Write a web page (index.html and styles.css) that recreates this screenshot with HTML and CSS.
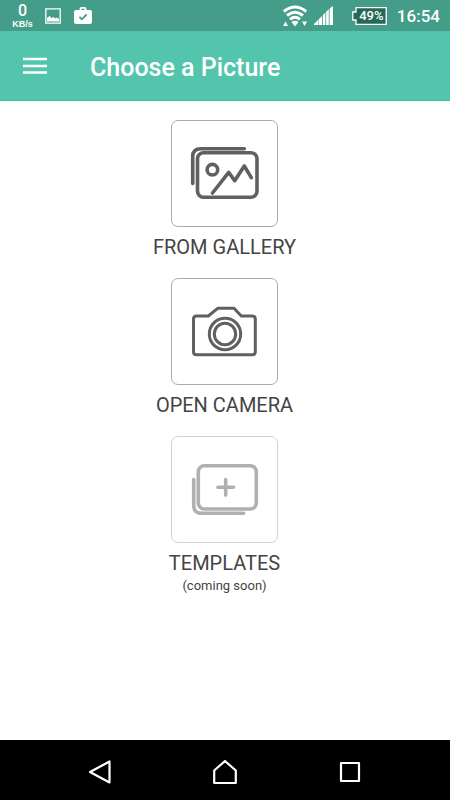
FILE: index.html
```html
<!DOCTYPE html>
<html lang="en">
<head>
<meta charset="utf-8">
<meta name="viewport" content="width=device-width, initial-scale=1">
<title>Choose a Picture</title>
<link rel="stylesheet" href="styles.css">
</head>
<body>
<div class="status">
  <div class="speed"><span class="speed-value">0</span><span class="speed-unit">KB/s</span></div>
  <svg class="picture-icon" width="16" height="16" viewBox="0 0 16 16"><path d="M.8.8h14.4v14.4H.8z" fill="none" stroke="#fff" stroke-width="1.3"/><path d="M2 13.500V10l2.500-2 2 2 2-1 2 1.500 1.500-1 2 1.500v2.500z" fill="#fff"/></svg>
  <svg class="case-icon" width="18" height="18" viewBox="0 0 18 18"><path fill="#fff" fill-rule="evenodd" d="M5.500 3V2q0-2 2-2h3q2 0 2 2v1H16q2 0 2 2v10q0 2-2 2H2q-2 0-2-2V5q0-2 2-2zM7.500 3h3V1.800h-3z"/><path d="M5.500 10l2.300 2.300L12.600 7.500" fill="none" stroke="#439d89" stroke-width="1.800"/></svg>
  <svg class="wifi-icon" width="26" height="22" viewBox="0 0 26 22"><path d="M1.800 6.500q11.200-9 22.400 0M5 10.500q8-6.400 16 0M8 14.300q5-4 10 0" fill="none" stroke="#fff" stroke-width="3"/><path d="M9.500 17q3.500-2.500 7 0L13 21.500zM1 21l2.500-4.500L6 21zM20 16.500h5L22.500 21z" fill="#fff"/></svg>
  <svg class="signal-icon" width="19" height="19" viewBox="0 0 19 19"><path d="M0 19v-1l4-4v5zM4.500 19v-5.500L8 10v9zM8.800 19V9.200L11.400 6.600V19zM12.200 19V5.800l2.600-2.600V19zM15.600 19V2.400L19 0v19z" fill="#fff"/></svg>
  <div class="battery">
    <svg width="35" height="18" viewBox="0 0 35 18"><path d="M4 .7h30.200v16.600H4V13H.8V5H4z" fill="#276758" stroke="#fff" stroke-width="1.300"/></svg>
    <span class="battery-value">49%</span>
  </div>
  <time class="clock">16:54</time>
</div>
<header class="bar">
  <button class="menu" aria-label="Menu"><svg width="24" height="18" viewBox="0 0 24 18"><path d="M0 2h24M0 9h24M0 15.500h24" stroke="#fff" stroke-width="2.500"/></svg></button>
  <h1 class="title">Choose a Picture</h1>
</header>
<main class="choices">
  <button class="choice">
    <span class="tile"><svg class="art" viewBox="0 0 105 105"><g stroke-width="3.600"><rect x="25.500" y="31.700" width="59.500" height="44.600" rx="6"/><path d="M20.700 62.500V35.700q0-8 8-8h43.600M40.500 72l16.200-20.700 6 8.400L72.300 45l7 11.700"/><circle cx="40.400" cy="48.700" r="5.300"/></g></svg></span>
    <span class="label">FROM GALLERY</span>
  </button>
  <button class="choice">
    <span class="tile"><svg class="art" viewBox="0 0 105 105"><g stroke-width="3"><path d="M24.500 37h11.800l9.400-7.700H62l7.300 7.700H80.300q3 0 3 3v32.700q0 3-3 3H24.500q-3 0-3-3V40q0-3 3-3z"/><circle cx="53" cy="55" r="15.700"/><circle cx="53" cy="55" r="10.700"/></g></svg></span>
    <span class="label">OPEN CAMERA</span>
  </button>
  <button class="choice" disabled>
    <span class="tile"><svg class="art" viewBox="0 0 105 105"><g stroke-width="3.600"><rect x="26.300" y="28.700" width="58" height="43.300" rx="6"/><path d="M21.700 42.500v25.800q0 8 8 8h42M53.700 42.500v15.600M45.900 50.300h15.600"/></g></svg></span>
    <span class="label">TEMPLATES</span>
    <span class="note">(coming soon)</span>
  </button>
</main>
<nav class="system">
  <button aria-label="Back"><svg width="26" height="26" viewBox="0 0 26 26"><path d="M3 13L22.500 2.500v21z"/></svg></button>
  <button aria-label="Home"><svg width="26" height="26" viewBox="0 0 26 26"><path d="M2.200 24V11.500L13 2l10.800 9.500V24z"/></svg></button>
  <button aria-label="Recent apps"><svg width="26" height="26" viewBox="0 0 26 26"><path d="M4 4h18v18H4z"/></svg></button>
</nav>
</body>
</html>
```
FILE: styles.css
```css
* { box-sizing: border-box; }
body {
  margin: 0;
  min-height: 100vh;
  display: flex;
  flex-direction: column;
  background: #fff;
  font-family: Roboto, "Liberation Sans", sans-serif;
}
button {
  border: 0;
  padding: 0;
  background: none;
  font: inherit;
}
svg { display: block; }
.status {
  height: 31px;
  padding: 0 10px 0 12px;
  display: flex;
  align-items: center;
  background: #439d89;
  color: #fff;
}
.speed {
  width: 21px;
  display: flex;
  flex-direction: column;
  align-items: center;
  font-weight: 700;
}
.speed-value {
  font-size: 16px;
  font-weight: 500;
  line-height: 16px;
}
.speed-unit {
  font-family: "Liberation Sans", sans-serif;
  font-size: 9px;
  line-height: 10px;
}
.picture-icon { margin-left: 12px; }
.case-icon { margin-left: 13px; }
.wifi-icon { margin-left: auto; }
.signal-icon { margin-left: 6px; }
.battery {
  margin-left: 19px;
  display: grid;
}
.battery > * { grid-area: 1 / 1; }
.battery-value {
  padding-left: 4px;
  text-align: center;
  font-size: 13px;
  font-weight: 500;
  line-height: 18px;
}
.clock {
  margin-left: 10px;
  font-size: 17px;
  font-weight: 500;
  line-height: 24px;
}
.bar {
  height: 70px;
  padding-left: 23px;
  display: flex;
  align-items: center;
  gap: 43px;
  background: #54c5ad;
  border-bottom: 1px solid #35bda2;
}
.title {
  margin: 0;
  padding-top: 4px;
  color: #fff;
  font-size: 25px;
  font-weight: 500;
  line-height: 30px;
}
.choices {
  flex: 1;
  padding: 19px 1px 19px 0;
  display: flex;
  flex-direction: column;
  gap: 19px;
}
.choice {
  display: flex;
  flex-direction: column;
  align-items: center;
  color: #444;
}
.tile {
  width: 107px;
  border: 1px solid #aaa;
  border-radius: 7px;
}
.art {
  width: 100%;
  fill: none;
  stroke: #606060;
  stroke-linecap: round;
  stroke-linejoin: round;
}
.choice:disabled .tile { border-color: #d2d2d2; }
.choice:disabled .art { stroke: #b0b0b0; }
.label {
  margin-top: 8px;
  font-size: 20px;
  line-height: 24px;
}
.note {
  font-size: 13px;
  line-height: 22px;
}
.system {
  height: 60px;
  padding: 4px 37px 0;
  display: grid;
  grid-template-columns: repeat(3, 1fr);
  background: #000;
}
.system button {
  display: grid;
  place-items: center;
}
.system svg {
  fill: none;
  stroke: #fff;
  stroke-width: 2.2;
  stroke-linejoin: round;
}
```
